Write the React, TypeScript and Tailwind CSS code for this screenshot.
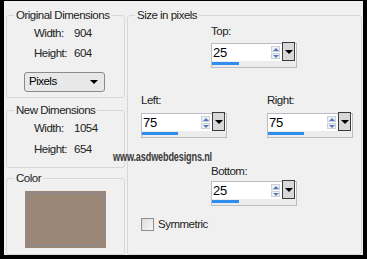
import { ReactNode } from 'react';

const FONT = "font-['Liberation_Sans',Arial,sans-serif]";

function GroupBox({
  title,
  className,
  children
}: {
  title: string;
  className: string;
  children: ReactNode;
}) {
  return (
    <div className={`relative rounded-[3px] border border-[#d3d9de] ${className}`}>
      <span className="absolute -top-[8px] left-[7px] whitespace-nowrap bg-[#f0f0f0] px-[2px] leading-[14px] text-[#222]">
        {title}
      </span>
      {children}
    </div>
  );
}

function SpinBox({ value, bar }: { value: string; bar: number }) {
  return (
    <div className="flex h-[25px] w-[86px] flex-col border border-[#b9bec4] bg-[#ececec]">
      <div className="flex h-[17px] items-center bg-white">
        <span className="flex-1 pl-[1px] text-[13px] leading-[17px] tracking-[-0.3px] text-black">{value}</span>
        <div className="mr-[2px] flex h-[13px] w-[9px] flex-col gap-[1px]">
          <div className="flex h-[6px] items-center justify-center border border-[#c8d0dc] bg-[#eef2f8]">
            <div className="h-0 w-0 border-x-[3px] border-b-[3px] border-x-transparent border-b-[#5a79b8]" />
          </div>
          <div className="flex h-[6px] items-center justify-center border border-[#c8d0dc] bg-[#eef2f8]">
            <div className="h-0 w-0 border-x-[3px] border-t-[3px] border-x-transparent border-t-[#5a79b8]" />
          </div>
        </div>
        <div className="-mt-[2px] mr-[1px] flex h-[19px] w-[13px] items-center justify-center border border-[#3c3c3c] bg-[#d8d8d8]">
          <div className="h-0 w-0 border-x-[4px] border-t-[4px] border-x-transparent border-t-black" />
        </div>
      </div>
      <div className="mt-[1px] h-[3px] bg-[#2f8df0]" style={{ width: bar }} />
    </div>
  );
}

export default function App() {
  return (
    <div className={`h-[259px] w-[367px] bg-black pl-[4px] pt-[1px] text-[11.5px] tracking-[-0.5px] ${FONT}`}>
      <div className="relative flex h-[254px] w-[359px] gap-[2px] bg-[#f0f0f0] pl-[2px] pt-[14px]">
        {/* left column */}
        <div className="flex w-[119px] flex-col">
          <GroupBox title="Original Dimensions" className="h-[83px]">
            <div className="mt-[10px] flex flex-col gap-[6px] pl-[27px] leading-[14px] text-[#222]">
              <div className="flex">
                <span className="w-[40px]">Width:</span>
                <span>904</span>
              </div>
              <div className="flex">
                <span className="w-[40px]">Height:</span>
                <span>604</span>
              </div>
            </div>
            <div className="ml-[17px] mt-[12px] flex h-[20px] w-[81px] items-center justify-between rounded-[3px] border border-[#8a8a8a] bg-[#e8e8e8] pl-[4px] pr-[6px]">
              <span className="text-black">Pixels</span>
              <div className="h-0 w-0 border-x-[4px] border-t-[4px] border-x-transparent border-t-black" />
            </div>
          </GroupBox>

          <GroupBox title="New Dimensions" className="mt-[12px] h-[58px]">
            <div className="mt-[10px] flex flex-col gap-[7px] pl-[27px] leading-[14px] text-[#222]">
              <div className="flex">
                <span className="w-[40px]">Width:</span>
                <span>1054</span>
              </div>
              <div className="flex">
                <span className="w-[40px]">Height:</span>
                <span>654</span>
              </div>
            </div>
          </GroupBox>

          <GroupBox title="Color" className="mt-[10px] h-[77px]">
            <div className="ml-[18px] mt-[12px] h-[57px] w-[81px] bg-[#9c8676] p-[2px]">
              <div className="h-full w-full border border-dotted border-[#6f8fb8]" />
            </div>
          </GroupBox>
        </div>

        {/* right group */}
        <GroupBox title="Size in pixels" className="h-[240px] w-[235px]">
          <div className="flex flex-col leading-[14px] text-[#222]">
            <div className="ml-[83px] mt-[8px] flex flex-col gap-[5px]">
              <span>Top:</span>
              <SpinBox value="25" bar={27} />
            </div>

            <div className="ml-[13px] mt-[25px] flex gap-[40px]">
              <div className="flex flex-col gap-[6px]">
                <span>Left:</span>
                <SpinBox value="75" bar={36} />
              </div>
              <div className="flex flex-col gap-[6px]">
                <span>Right:</span>
                <SpinBox value="75" bar={36} />
              </div>
            </div>

            <div className="ml-[83px] mt-[26px] flex flex-col gap-[3px]">
              <span>Bottom:</span>
              <SpinBox value="25" bar={27} />
            </div>

            <div className="ml-[13px] mt-[11px] flex items-center gap-[4px]">
              <div className="h-[13px] w-[13px] border border-[#8f8f8f] bg-gradient-to-br from-[#dcdcdc] to-[#f8f8f8]" />
              <span>Symmetric</span>
            </div>
          </div>
        </GroupBox>

        {/* watermark */}
        <span className="absolute left-[109px] top-[147px] origin-left scale-x-[0.76] whitespace-nowrap text-[12px] font-bold tracking-[-0.2px] text-[#3a3a3a]">
          www.asdwebdesigns.nl
        </span>
      </div>
    </div>
  );
}
